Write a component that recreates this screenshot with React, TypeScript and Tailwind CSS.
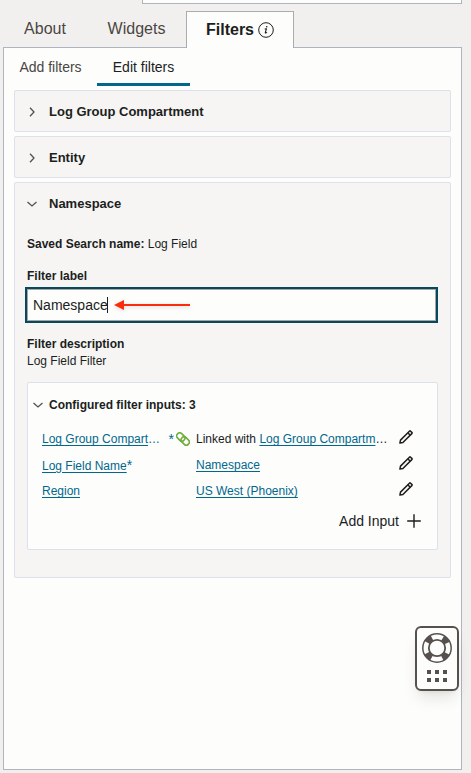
import { useState, type ReactNode } from "react";

type IconProps = { className?: string };

function Chevron({ open = false }: { open?: boolean }) {
  return (
    <svg viewBox="0 0 10 10" className="h-2.5 w-2.5 shrink-0" fill="none" stroke="#55504d" strokeWidth="1.3">
      <path d={open ? "M0.5 3 L5 7 L9.5 3" : "M3 0.8 L7 5 L3 9.2"} />
    </svg>
  );
}

function InfoIcon() {
  return (
    <svg viewBox="0 0 16 16" className="h-4 w-4" fill="none" stroke="#201e1c">
      <circle cx="8" cy="8" r="7.3" strokeWidth="1" />
      <path d="M6.7 7 L8.4 6.8 L7.3 10.7 Q7.3 11.4 9 10.4" strokeWidth="1.1" />
      <circle cx="8.7" cy="4.7" r="0.8" fill="#201e1c" stroke="none" />
    </svg>
  );
}

function LinkIcon({ className = "" }: IconProps) {
  return (
    <svg viewBox="0 0 14 14" className={`h-3.5 w-3.5 ${className}`} fill="none" stroke="#6fad3c" strokeWidth="1.6">
      <rect x="0.3" y="2" width="9" height="6" rx="2.8" transform="rotate(45 4.8 5)" />
      <rect x="4.7" y="6" width="9" height="6" rx="2.8" transform="rotate(45 9.2 9)" />
    </svg>
  );
}

function PencilIcon() {
  return (
    <svg viewBox="0 0 14 14" className="h-3.5 w-3.5" fill="none" stroke="#201e1c" strokeWidth="1.5" strokeLinejoin="round">
      <path d="M0.9 13.1 L1.5 10.1 L10.4 1.2 Q11 0.6 11.6 1.2 L12.8 2.4 Q13.4 3 12.8 3.6 L3.9 12.5 Z" />
      <path d="M8.8 2.8 L11.2 5.2" />
    </svg>
  );
}

function PlusIcon() {
  return (
    <svg viewBox="0 0 14 14" className="h-3.5 w-3.5" stroke="#201e1c" strokeWidth="1.4">
      <path d="M7 0.2 V13.8 M0.2 7 H13.8" />
    </svg>
  );
}

function LifebuoyIcon() {
  return (
    <svg viewBox="0 0 30 30" className="h-[30px] w-[30px]" fill="none" stroke="#57514d">
      <circle cx="15" cy="15" r="11" strokeWidth="6.6" strokeDasharray="6.4 10.879" strokeDashoffset="-5.44" />
      <circle cx="15" cy="15" r="14.2" strokeWidth="1.5" />
      <circle cx="15" cy="15" r="8.2" strokeWidth="1.8" />
    </svg>
  );
}

function ArrowCallout() {
  return (
    <svg viewBox="0 0 78 14" className="h-3.5 w-[78px] drop-shadow-sm">
      <path d="M9 7 H76" stroke="#fb2b0b" strokeWidth="2" />
      <path d="M0 7 L10 2 V12 Z" fill="#fb2b0b" />
    </svg>
  );
}

function Section({ title, open = false, children }: { title: string; open?: boolean; children?: ReactNode }) {
  return (
    <section className="rounded-xs border border-[#dde1ec] bg-[#f6f5f4]">
      <h2>
        <button type="button" aria-expanded={open} className="flex h-10 w-full items-center gap-3 px-3 pt-px text-left text-[13px] font-bold">
          <Chevron open={open} />
          {title}
        </button>
      </h2>
      {children}
    </section>
  );
}

function FieldLink({ text, more = false }: { text: string; more?: boolean }) {
  return (
    <>
      <a href="#edit" className="text-[#00688c] underline underline-offset-2">{text}</a>
      {more && "…"}
    </>
  );
}

function InputRow({ name, value }: { name: ReactNode; value: ReactNode }) {
  return (
    <tr className="h-[26px]">
      <td className="whitespace-nowrap text-[#00688c]">{name}</td>
      <td className="whitespace-nowrap">{value}</td>
      <td>
        <button type="button" aria-label="Edit input" className="block pb-1">
          <PencilIcon />
        </button>
      </td>
    </tr>
  );
}

export default function App() {
  const [label, setLabel] = useState("Namespace");

  return (
    <div className="flex min-h-screen flex-col bg-[#f2f0ef] pr-[9px] pb-[3px] pl-[3px] font-['Liberation_Sans',Arial,sans-serif] text-[#201e1c]">
      <div className="ml-[139px] h-1 border border-t-0 border-[#aeb4c0] bg-[#fdfdfc]" />

      <nav className="mt-[7px] flex h-[37px] text-base text-[#4a4643]">
        <button type="button" className="w-[84px] border-b border-[#aeb4c0]">About</button>
        <button type="button" className="w-[99px] border-b border-[#aeb4c0]">Widgets</button>
        <button type="button" className="flex w-[108px] items-center justify-center gap-1 border border-b-0 border-[#a9adb3] bg-[#fdfdfc] font-bold text-[#201e1c]">
          Filters
          <InfoIcon />
        </button>
        <div className="flex-1 border-b border-[#aeb4c0]" />
      </nav>

      <main className="flex-1 border border-t-0 border-[#aeb4c0] bg-[#fdfdfc] px-2.5">
        <div className="-ml-2.5 flex h-[38px] text-sm">
          <button type="button" className="w-[93px] border-b-3 border-transparent pt-0.5 text-[#4a4643]">Add filters</button>
          <button type="button" className="w-[93px] border-b-3 border-[#00688c] pt-0.5">Edit filters</button>
        </div>

        <div className="mt-1 flex flex-col gap-1">
          <Section title="Log Group Compartment" />
          <Section title="Entity" />
          <Section title="Namespace" open>
            <div className="px-3 pt-[13px] pb-[27px] text-xs leading-4">
              <p>
                <b>Saved Search name:</b> Log Field
              </p>
              <label htmlFor="filter-label" className="mt-4 block font-bold">Filter label</label>
              <div className="relative mt-[5px] mr-0.5">
                <input
                  id="filter-label"
                  value={label}
                  onChange={(event) => setLabel(event.target.value)}
                  className="block h-8 w-full border border-[#aaa49e] bg-[#fdfdfc] px-[5px] text-sm outline-2 outline-[#04495f]"
                />
                <div className="pointer-events-none absolute inset-y-0 left-20 flex items-center gap-1.5">
                  <span className="h-4 w-px bg-[#201e1c]" />
                  <ArrowCallout />
                </div>
              </div>
              <h3 className="mt-[15px] font-bold">Filter description</h3>
              <p className="mt-px">Log Field Filter</p>

              <div className="mt-[13px] rounded-xs border border-[#dde1ec] bg-[#fdfdfc] px-[5px] pt-2.5 pb-3.5">
                <h3>
                  <button type="button" aria-expanded="true" className="flex h-6 items-center gap-1.5 font-bold">
                    <Chevron open />
                    Configured filter inputs: 3
                  </button>
                </h3>
                <div className="mt-[9px] pl-[9px]">
                  <table className="w-full table-fixed">
                    <colgroup>
                      <col className="w-[154px]" />
                      <col />
                      <col className="w-[33px]" />
                    </colgroup>
                    <tbody>
                      <InputRow
                        name={
                          <span className="flex items-center pr-1.5">
                            <FieldLink text="Log Group Compart" more />
                            <span className="ml-auto text-sm leading-4">*</span>
                            <LinkIcon className="ml-0.5" />
                          </span>
                        }
                        value={
                          <>
                            Linked with <FieldLink text="Log Group Compartm" more />
                          </>
                        }
                      />
                      <InputRow
                        name={
                          <>
                            <FieldLink text="Log Field Name" />
                            <span className="text-sm leading-4">*</span>
                          </>
                        }
                        value={<FieldLink text="Namespace" />}
                      />
                      <InputRow name={<FieldLink text="Region" />} value={<FieldLink text="US West (Phoenix)" />} />
                    </tbody>
                  </table>
                </div>
                <button type="button" className="mt-[3px] mr-[11px] ml-auto flex h-7 items-center gap-2 text-sm">
                  Add Input
                  <PlusIcon />
                </button>
              </div>
            </div>
          </Section>
        </div>
      </main>

      <button
        type="button"
        aria-label="Help"
        className="fixed right-3 bottom-[82px] flex h-[65px] w-11 flex-col items-center gap-[7px] rounded-md border-2 border-[#57514d] bg-[#fdfdfc] pt-[5px] shadow-lg"
      >
        <LifebuoyIcon />
        <span className="grid grid-cols-3 gap-1">
          <i className="h-1 w-1 bg-[#57514d]" />
          <i className="h-1 w-1 bg-[#57514d]" />
          <i className="h-1 w-1 bg-[#57514d]" />
          <i className="h-1 w-1 bg-[#57514d]" />
          <i className="h-1 w-1 bg-[#57514d]" />
          <i className="h-1 w-1 bg-[#57514d]" />
        </span>
      </button>
    </div>
  );
}
